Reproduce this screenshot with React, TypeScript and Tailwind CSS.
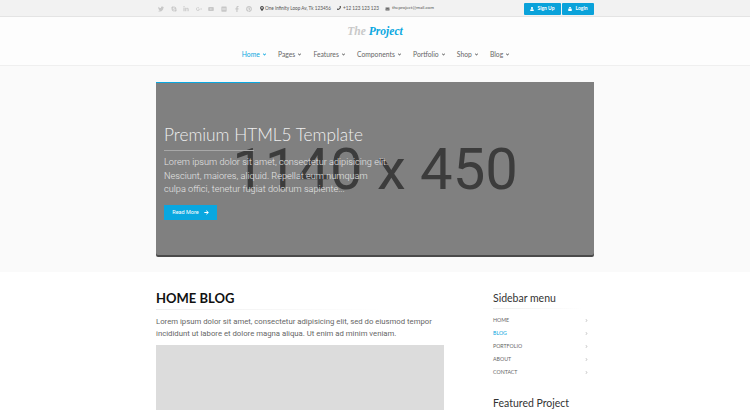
import React from "react";
import {
  FaTwitter, FaSkype, FaLinkedinIn, FaGooglePlusG, FaYoutube, FaFlickr, FaFacebookF, FaPinterest,
  FaMapMarkerAlt, FaPhone, FaEnvelope, FaUser, FaLock, FaArrowRight, FaAngleRight, FaAngleDown,
} from "react-icons/fa";

const socials = [FaTwitter, FaSkype, FaLinkedinIn, FaGooglePlusG, FaYoutube, FaFlickr, FaFacebookF, FaPinterest];
const nav = ["Home", "Pages", "Features", "Components", "Portfolio", "Shop", "Blog"];
const side = ["HOME", "BLOG", "PORTFOLIO", "ABOUT", "CONTACT"];

export default function App() {
  return (
    <div className="h-[410px] w-[750px] overflow-hidden bg-white font-['Lato',sans-serif] text-[#666]">
      <div className="h-[17px] border-b border-[#e4e4e4] bg-[#f2f2f2]">
        <div className="mx-auto flex h-4 w-[438px] items-center pt-[1px]">
          <div className="ml-[2px] flex w-[98px] items-center gap-[6.6px] text-[#c8c8c8]">
            {socials.map((I, i) => (
              <span key={i} className="flex w-[6px] justify-center">
                <I className="h-[6px] w-[6px] shrink-0" />
              </span>
            ))}
          </div>
          <div className="ml-[4px] flex items-center gap-[1px] whitespace-nowrap text-[4.65px] text-[#555]">
            <FaMapMarkerAlt className="h-[5px] w-[4px] text-[#444]" />
            <span>One Infinity Loop Av, Tk 123456</span>
          </div>
          <div className="ml-[6px] flex items-center gap-[2px] whitespace-nowrap text-[4.65px] text-[#555]">
            <FaPhone className="h-[4px] w-[4px] text-[#444]" />
            <span>+12 123 123 123</span>
          </div>
          <div className="ml-[6px] flex items-center gap-[2px] whitespace-nowrap text-[4.55px] text-[#555]">
            <FaEnvelope className="h-[4px] w-[5px] text-[#666]" />
            <span>theproject@mail.com</span>
          </div>
          <div className="ml-auto flex gap-[1px]">
            <div className="flex h-[12px] w-[37px] items-center justify-center gap-[3px] rounded-[1px] bg-[#0aa2da] text-[5px] font-bold text-white">
              <FaUser className="h-[4px] w-[4px]" />
              <span>Sign Up</span>
            </div>
            <div className="flex h-[12px] w-[32px] items-center justify-center gap-[3px] rounded-[1px] bg-[#0aa2da] text-[5px] font-bold text-white">
              <FaLock className="h-[4px] w-[4px]" />
              <span>Login</span>
            </div>
          </div>
        </div>
      </div>

      <div className="h-[49px] border-b border-[#efefef] bg-[#fdfdfd]">
        <div className="flex h-[22px] items-end justify-center">
          <div className="flex items-baseline gap-[3px] font-['Liberation_Serif',serif] text-[11.5px] font-bold italic leading-[16px]">
            <span className="text-[#c9c9c9]">The</span>
            <span className="text-[#09a7e0]">Project</span>
          </div>
        </div>
        <div className="mx-auto mt-[9px] flex w-[438px] justify-center gap-[11.2px] pl-[2px] text-[6.75px] leading-[12px] text-[#666]">
          {nav.map((n, i) => (
            <div key={n} className={i === 0 ? "flex items-center gap-[2px] text-[#09a7e0]" : "flex items-center gap-[2px]"}>
              <span>{n}</span>
              <FaAngleDown className="h-[5px] w-[5px]" />
            </div>
          ))}
        </div>
      </div>

      <div className="h-[206px] bg-[#fafafa] pt-[16px]">
        <div className="relative mx-auto h-[173px] w-[438px] rounded-b-[2px] bg-[#808080] shadow-[0_2px_0_#4a4a4a]">
          <div className="absolute left-0 top-0 h-[1px] w-[104px] bg-[#09a7e0]" />
          <div className="absolute inset-0 flex items-center justify-center font-['Roboto',sans-serif] text-[58px] leading-none text-[#3c3c3c]">
            1140 x 450
          </div>
          <div className="relative flex w-[240px] flex-col pl-[8px] pt-[42px]">
            <div className="whitespace-nowrap text-[17.25px] font-light leading-[22px] text-[#efefef]">Premium HTML5 Template</div>
            <div className="mt-[4px] h-[1px] w-[90px] bg-[#a8a8a8]" />
            <div className="mt-[4px] w-[236px] whitespace-nowrap font-['Roboto',sans-serif] text-[9.2px] font-light leading-[13.5px] text-[#e6e6e6]">
              <div>Lorem ipsum dolor sit amet, consectetur adipisicing elit.</div>
              <div>Nesciunt, maiores, aliquid. Repellat eum numquam</div>
              <div>culpa offici, tenetur fugiat dolorum sapiente...</div>
            </div>
            <div className="mt-[9px] flex h-[15px] w-[53px] items-center justify-center gap-[5px] bg-[#09a7e0] font-['Roboto',sans-serif] text-[5.5px] text-white">
              <span>Read More</span>
              <FaArrowRight className="h-[5px] w-[5px]" />
            </div>
          </div>
        </div>
      </div>

      <div className="mx-auto flex w-[438px] bg-white">
        <div className="w-[288px]">
          <div className="mt-[18px] text-[13px] font-bold leading-[16px] text-[#111]">HOME BLOG</div>
          <div className="mt-[3px] h-[1px] w-[228px] bg-gradient-to-r from-[#eeeeee] to-white" />
          <div className="mt-[6px] whitespace-nowrap font-['Roboto',sans-serif] text-[7.75px] leading-[11.5px] text-[#666]">
            <div>Lorem ipsum dolor sit amet, consectetur adipisicing elit, sed do eiusmod tempor</div>
            <div>incididunt ut labore et dolore magna aliqua. Ut enim ad minim veniam.</div>
          </div>
          <div className="mt-[6px] h-[70px] w-[288px] bg-[#dcdcdc]" />
        </div>
        <div className="ml-[49px] w-[101px]">
          <div className="mt-[19px] text-[10.5px] leading-[14px] text-[#333]">Sidebar menu</div>
          <div className="mt-[3px] h-[1px] w-[90px] bg-gradient-to-r from-[#eeeeee] to-white" />
          <div className="mt-[5px] flex w-[96px] flex-col">
            {side.map((s) => (
              <div key={s} className={s === "BLOG" ? "flex h-[13px] items-center justify-between text-[5.25px] text-[#09a7e0]" : "flex h-[13px] items-center justify-between text-[5.25px] text-[#666]"}>
                <span>{s}</span>
                <FaAngleRight className="h-[5px] w-[5px] text-[#ccc]" />
              </div>
            ))}
          </div>
          <div className="mt-[17px] text-[10.5px] leading-[14px] text-[#333]">Featured Project</div>
        </div>
      </div>
    </div>
  );
}
